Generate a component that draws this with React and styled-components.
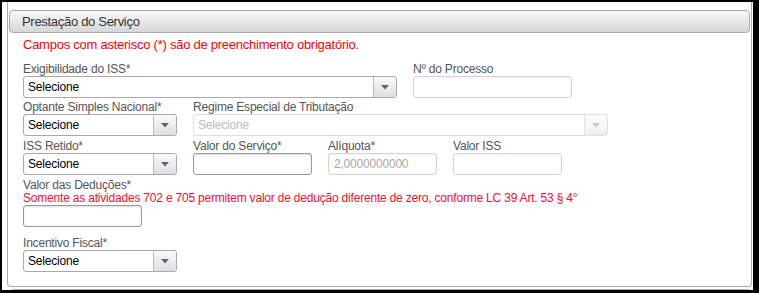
import React from "react";
import styled, { createGlobalStyle } from "styled-components";

const Global = createGlobalStyle`
  html, body { margin: 0; padding: 0; background: #000; }
  body { font-family: "Liberation Sans", Arial, sans-serif; }
  * { box-sizing: border-box; }
`;

const Frame = styled.div`
  margin: 2px 6px 0 2px;
  height: 288px;
  background: #fff;
  overflow: hidden;
  display: flex;
  flex-direction: column;
`;

const Panel = styled.section`
  margin: 0 1px 0 5px;
  height: 285px;
  border: 1px solid #aaa;
  border-top: none;
  border-radius: 0 0 4px 4px;
  padding: 8px 1px 0 1px;
  flex-shrink: 0;
`;

const NextPanel = styled.div`
  margin: 2px 2px 0 8px;
  height: 10px;
  border: 1px solid #aaa;
  border-bottom: none;
  border-radius: 4px 4px 0 0;
  flex-shrink: 0;
`;

const Header = styled.div`
  height: 23px;
  border: 1px solid #aaa;
  border-radius: 4px;
  background: linear-gradient(#f9f9f9, #d6d6d6);
  color: #333;
  font-size: 13px;
  letter-spacing: -0.3px;
  line-height: 21px;
  padding-left: 12px;
`;

const Body = styled.div`
  padding: 5px 0 0 14px;
`;

const Notice = styled.div`
  color: #f00;
  font-size: 13px;
  letter-spacing: -0.25px;
  line-height: 14px;
  margin-bottom: 10px;
`;

const Hint = styled.div`
  color: #f01030;
  font-size: 12px;
  letter-spacing: -0.2px;
  line-height: 13px;
  white-space: nowrap;
`;

const Row = styled.div`
  display: flex;
  gap: 16px;
  margin-bottom: ${(p) => p.$mb ?? 3}px;
`;

const Field = styled.div`
  width: ${(p) => p.$w}px;
  display: flex;
  flex-direction: column;
`;

const Label = styled.label`
  color: #555;
  font-size: 12px;
  letter-spacing: -0.2px;
  line-height: 14px;
  height: 14px;
  white-space: nowrap;
`;

const SelectBox = styled.div`
  height: 22px;
  border: 1px solid ${(p) => (p.$disabled ? "#ddd" : "#aaa")};
  border-radius: 3px;
  background: #fff;
  display: flex;
  align-items: stretch;
  overflow: hidden;
`;

const SelectText = styled.span`
  flex: 1;
  font-size: 12px;
  letter-spacing: -0.2px;
  line-height: 20px;
  padding-left: 4px;
  color: ${(p) => (p.$disabled ? "#bbb" : "#000")};
`;

const ArrowBtn = styled.span`
  width: 23px;
  border-left: 1px solid ${(p) => (p.$disabled ? "#e2e2e2" : "#bbb")};
  background: ${(p) =>
    p.$disabled ? "linear-gradient(#fdfdfd, #f0f0f0)" : "linear-gradient(#fafafa, #dedede)"};
  display: flex;
  align-items: center;
  justify-content: center;
`;

const TextInput = styled.div`
  height: 22px;
  border: 1px solid ${(p) => (p.$dark ? "#9a9a9a" : "#d4d4d4")};
  border-radius: 3px;
  background: #fff;
  box-shadow: inset 0 1px 2px ${(p) => (p.$dark ? "rgba(0,0,0,0.15)" : "rgba(0,0,0,0.05)")};
  font-size: 12px;
  letter-spacing: -0.2px;
  line-height: 20px;
  padding-left: 5px;
  color: #aaa;
`;

const Arrow = ({ disabled }) => (
  <svg width="8" height="5" viewBox="0 0 8 5">
    <path d="M0 0 L8 0 L4 4.5 Z" fill={disabled ? "#c4ccd2" : "#4d6c80"} />
  </svg>
);

const Select = ({ disabled }) => (
  <SelectBox $disabled={disabled}>
    <SelectText $disabled={disabled}>Selecione</SelectText>
    <ArrowBtn $disabled={disabled}>
      <Arrow disabled={disabled} />
    </ArrowBtn>
  </SelectBox>
);

export default function App() {
  return (
    <>
      <Global />
      <Frame>
        <Panel>
          <Header>Prestação do Serviço</Header>
          <Body>
            <Notice>Campos com asterisco (*) são de preenchimento obrigatório.</Notice>
            <Row $mb={2}>
              <Field $w={374}>
                <Label>Exigibilidade do ISS*</Label>
                <Select />
              </Field>
              <Field $w={159}>
                <Label>Nº do Processo</Label>
                <TextInput />
              </Field>
            </Row>
            <Row $mb={3}>
              <Field $w={154}>
                <Label>Optante Simples Nacional*</Label>
                <Select />
              </Field>
              <Field $w={415}>
                <Label>Regime Especial de Tributação</Label>
                <Select disabled />
              </Field>
            </Row>
            <Row $mb={3}>
              <Field $w={154}>
                <Label>ISS Retido*</Label>
                <Select />
              </Field>
              <Field $w={119}>
                <Label>Valor do Serviço*</Label>
                <TextInput $dark />
              </Field>
              <Field $w={109}>
                <Label>Alíquota*</Label>
                <TextInput>2,0000000000</TextInput>
              </Field>
              <Field $w={109}>
                <Label>Valor ISS</Label>
                <TextInput />
              </Field>
            </Row>
            <Row $mb={9}>
              <Field $w={119}>
                <Label>Valor das Deduções*</Label>
                <Hint>
                  Somente as atividades 702 e 705 permitem valor de dedução diferente de zero, conforme LC 39 Art. 53 § 4°
                </Hint>
                <TextInput $dark />
              </Field>
            </Row>
            <Row>
              <Field $w={154}>
                <Label>Incentivo Fiscal*</Label>
                <Select />
              </Field>
            </Row>
          </Body>
        </Panel>
        <NextPanel />
      </Frame>
    </>
  );
}
